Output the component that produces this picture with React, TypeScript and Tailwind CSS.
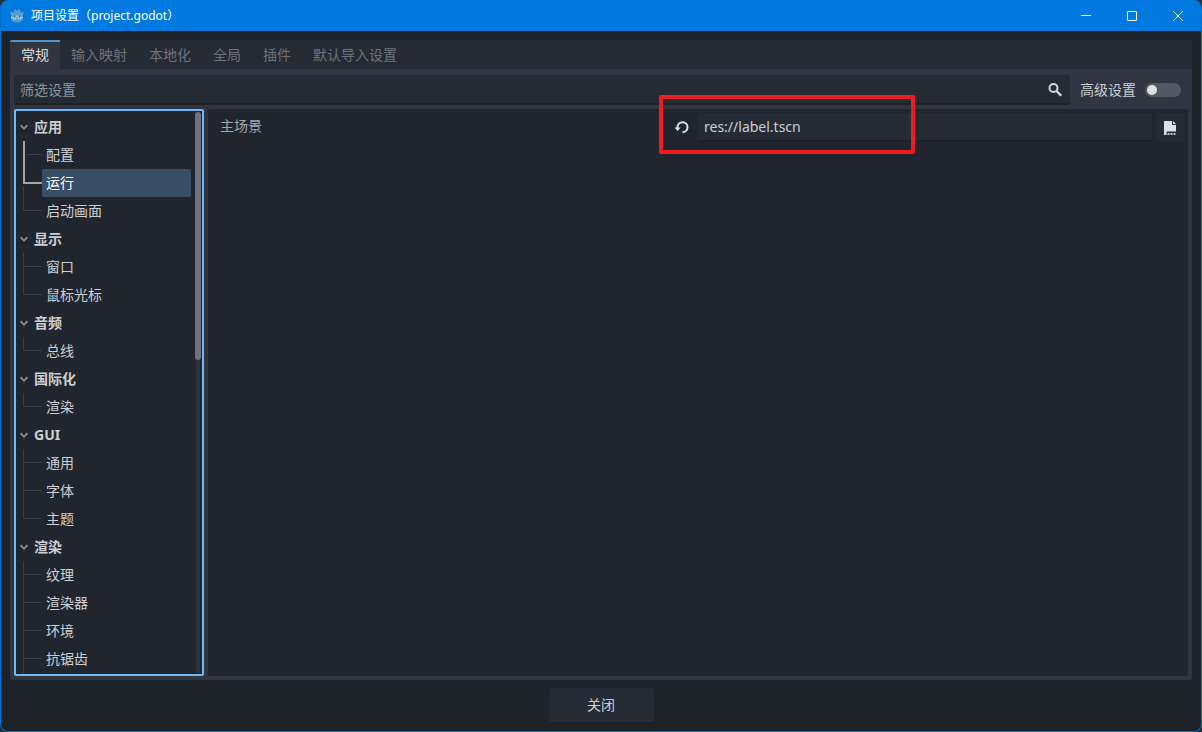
import { useState } from "react";

type Section = {
  name: string;
  items: string[];
  continues?: boolean;
};

const tabs = ["常规", "输入映射", "本地化", "全局", "插件", "默认导入设置"];

const sections: Section[] = [
  { name: "应用", items: ["配置", "运行", "启动画面"] },
  { name: "显示", items: ["窗口", "鼠标光标"] },
  { name: "音频", items: ["总线"] },
  { name: "国际化", items: ["渲染"] },
  { name: "GUI", items: ["通用", "字体", "主题"] },
  { name: "渲染", items: ["纹理", "渲染器", "环境", "抗锯齿"], continues: true },
];

function GodotIcon() {
  return (
    <svg width="16" height="16" viewBox="0 0 16 16" aria-hidden="true">
      <path
        d="M1 5.2 2.6 3.6 4 4.4l1.2-.7L5 2l2-.8.7 1.5h.8L9.2 1.2l2 .8-.2 1.7 1.2.7 1.3-.8L15 5.2l-1 1.6V11c0 2.200-2.800 3.600-6 3.600S2 13.200 2 11V6.800Z"
        fill="#4f9dcc"
      />
      <path d="M2 9.600h2.500v1.600h2V10h3v1.200h2V9.600H14" fill="none" stroke="#c3dfee" strokeWidth="0.7" />
      <circle cx="5" cy="8" r="1.500" fill="#c3dfee" />
      <circle cx="11" cy="8" r="1.500" fill="#c3dfee" />
      <circle cx="5.200" cy="8" r="1" fill="#35536b" />
      <circle cx="10.800" cy="8" r="1" fill="#35536b" />
      <path d="M8 7.500v1.500" stroke="#e3eef4" />
    </svg>
  );
}

function TitleBar() {
  return (
    <header className="flex h-[31px] items-center bg-[#007ae0] pl-2 text-white">
      <GodotIcon />
      <h1 className="ml-1.5 flex-1 pt-px font-['Noto_Sans','Noto_Sans_CJK_SC',sans-serif] text-xs">
        项目设置（project.godot）
      </h1>
      <button type="button" aria-label="最小化" className="flex h-full w-[46px] items-center justify-center">
        <svg width="10" height="10" viewBox="0 0 10 10">
          <path d="M0 4.500h10" stroke="white" />
        </svg>
      </button>
      <button type="button" aria-label="最大化" className="flex h-full w-[46px] items-center justify-center">
        <svg width="10" height="10" viewBox="0 0 10 10">
          <rect x="0.500" y="0.500" width="9" height="9" rx="0.500" fill="none" stroke="white" />
        </svg>
      </button>
      <button type="button" aria-label="关闭窗口" className="flex h-full w-[46px] items-center justify-center">
        <svg width="10" height="10" viewBox="0 0 10 10">
          <path d="M0 0l10 10M10 0L0 10" stroke="white" />
        </svg>
      </button>
    </header>
  );
}

// Connector between a section heading and one of its rows.
function Branch({ index, selected, last }: { index: number; selected: number; last: boolean }) {
  const dim = "#3b4048";
  const bright = "#a3a5a8";

  if (index < selected) {
    return (
      <svg width="19" height="28" className="shrink-0">
        <path d="M4 13.500h15" stroke={dim} />
        <path d="M1 0v28" stroke={bright} strokeWidth="2" />
      </svg>
    );
  }

  if (index === selected) {
    return (
      <svg width="19" height="28" className="shrink-0">
        <path d="M1 0v14h18" fill="none" stroke={bright} strokeWidth="2" />
        {!last && <path d="M0.500 17v11" stroke={dim} />}
      </svg>
    );
  }

  return (
    <svg width="19" height="28" className="shrink-0">
      <path d={last ? "M0.500 0v13.500h18.500" : "M0.500 0v28M1 13.500h18"} fill="none" stroke={dim} />
    </svg>
  );
}

function SettingsTree() {
  const [active, setActive] = useState("应用/运行");

  return (
    <nav className="flex w-[190px] shrink-0 rounded-xs border-2 border-[#70bafa] bg-[#21262e]">
      <ul className="min-w-0 flex-1 pt-0.5">
        {sections.map((section) => {
          const selected = section.items.findIndex((item) => active === `${section.name}/${item}`);

          return (
            <li key={section.name}>
              <button type="button" className="flex h-7 w-full items-center pl-1 font-bold">
                <svg width="8" height="6" viewBox="0 0 8 6" className="mr-1.5">
                  <path d="M0.600 1.300 4 4.600l3.400-3.300" fill="none" stroke="#85888d" strokeWidth="2" />
                </svg>
                {section.name}
              </button>
              <ul>
                {section.items.map((item, index) => (
                  <li key={item} className="flex h-7 items-center pl-[7px]">
                    <Branch
                      index={index}
                      selected={selected}
                      last={index === section.items.length - 1 && !section.continues}
                    />
                    <button
                      type="button"
                      onClick={() => setActive(`${section.name}/${item}`)}
                      className={
                        index === selected
                          ? "h-7 flex-1 rounded-xs bg-[#394e65] pl-1 text-left text-white"
                          : "h-7 flex-1 pl-1 text-left"
                      }
                    >
                      {item}
                    </button>
                  </li>
                ))}
              </ul>
            </li>
          );
        })}
      </ul>
      <div className="ml-1 mr-px flex w-1.5 flex-col items-center py-px">
        <div className="h-[248px] w-1.5 rounded-full bg-[#6f7277]" />
        <div className="w-1 flex-1 bg-[#2d3139]" />
      </div>
    </nav>
  );
}

function MainSceneProperty() {
  const [path, setPath] = useState("res://label.tscn");

  return (
    <div className="flex">
      <div className="flex h-7 w-1/2 items-center justify-between px-2">
        <label htmlFor="main-scene" className="pb-0.5 text-[#a5a8ab]">
          主场景
        </label>
        <button type="button" aria-label="重置" className="flex size-4 items-center justify-center">
          <svg width="16" height="16" viewBox="0 0 16 16">
            <path
              d="M3.500 9.500V8a5 5 0 1 1 5 5.200"
              fill="none"
              stroke="#e0e0e0"
              strokeWidth="2"
            />
            <path d="M0.500 8.500h6.200L3.600 12Z" fill="#e0e0e0" />
          </svg>
        </button>
      </div>
      <div className="relative flex w-1/2 gap-1">
        <input
          id="main-scene"
          value={path}
          onChange={(e) => setPath(e.target.value)}
          className="h-[29px] min-w-0 flex-1 rounded-xs border-b-2 border-[#1d2229] bg-[#252b34] px-1.5 outline-none"
        />
        <button
          type="button"
          aria-label="选择文件"
          className="flex h-[29px] w-7 items-center justify-center rounded-xs bg-[#252b34]"
        >
          <svg width="12" height="14" viewBox="0 0 12 14">
            <path d="M0 0h8v4h4v6.500H2.500V14H0Z" fill="#e0e0e0" />
            <path d="M9 0l3 3H9Z" fill="#e0e0e0" />
            <path d="M3.500 12h2v2h-2ZM6.500 12h2v2h-2ZM9.500 12h2v2h-2Z" fill="#c4c5c7" />
          </svg>
        </button>
        <div className="pointer-events-none absolute -left-[39px] -top-[18px] h-[59px] w-64 rounded-xs border-4 border-[#ed1c24]" />
      </div>
    </div>
  );
}

export default function App() {
  const [tab, setTab] = useState("常规");
  const [filter, setFilter] = useState("");
  const [advanced, setAdvanced] = useState(false);

  return (
    <div className="min-h-screen bg-[#2b2b2b] font-['Noto_Sans','Noto_Sans_CJK_SC',sans-serif] text-sm text-[#cdcfd2]">
      <div className="flex min-h-screen flex-col overflow-hidden rounded-lg border border-t-0 border-[#0073d0] bg-[#1d2229]">
        <TitleBar />

        <main className="flex flex-1 flex-col px-[9px] pb-[9px] pt-[9px]">
          <div className="flex flex-1 flex-col overflow-hidden rounded-xs bg-[#303541]">
            <div role="tablist" className="flex h-[29px] bg-[#252b34]">
              {tabs.map((name) => (
                <button
                  key={name}
                  type="button"
                  role="tab"
                  aria-selected={tab === name}
                  onClick={() => setTab(name)}
                  className={
                    tab === name
                      ? "border-t-2 border-[#5294cc] bg-[#303541] px-[11px] pb-0.5 text-[#dadbdc]"
                      : "border-t-2 border-transparent px-[11px] pb-0.5 text-[#6f7379]"
                  }
                >
                  {name}
                </button>
              ))}
            </div>

            <div className="flex flex-1 flex-col gap-1 px-1 pb-1 pt-1.5">
              <div className="flex items-center">
                <div className="flex h-[30px] flex-1 items-center rounded-xs border-b-2 border-[#1d2229] bg-[#252b34] pl-1.5 pr-2 pt-0.5">
                  <input
                    type="text"
                    aria-label="筛选设置"
                    placeholder="筛选设置"
                    value={filter}
                    onChange={(e) => setFilter(e.target.value)}
                    className="min-w-0 flex-1 bg-transparent outline-none placeholder:text-[#92959a]"
                  />
                  <svg width="14" height="14" viewBox="0 0 14 14">
                    <circle cx="5.500" cy="5" r="4" fill="none" stroke="#d4d5d6" strokeWidth="2" />
                    <path d="M8.500 8l4.700 4.700" stroke="#d4d5d6" strokeWidth="2.400" />
                  </svg>
                </div>
                <label className="ml-2.5 mr-[7px] flex items-center gap-[9px]">
                  高级设置
                  <input
                    type="checkbox"
                    checked={advanced}
                    onChange={(e) => setAdvanced(e.target.checked)}
                    className="flex h-3.5 w-9 appearance-none items-center rounded-full bg-[#535962] px-0.5 before:size-2.5 before:rounded-full before:bg-[#e0e0e0] checked:justify-end checked:bg-[#70bafa]"
                  />
                </label>
              </div>

              <div className="flex flex-1 gap-1">
                <SettingsTree />
                <section className="flex-1 rounded-xs bg-[#21262e] p-1">
                  <MainSceneProperty />
                </section>
              </div>
            </div>
          </div>

          <button
            type="button"
            className="mt-2 h-[34px] w-[105px] self-center rounded-xs bg-[#252b34]"
          >
            关闭
          </button>
        </main>
      </div>
    </div>
  );
}
